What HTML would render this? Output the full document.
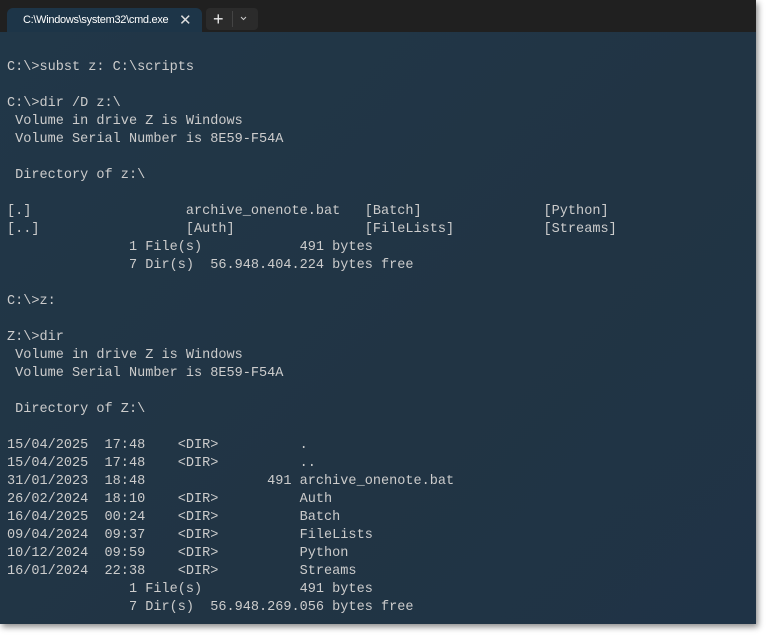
<!DOCTYPE html>
<html><head><meta charset="utf-8"><style>
html,body{margin:0;padding:0;background:#fff;width:768px;height:638px;overflow:hidden}
.win{position:absolute;left:0;top:0;width:756px;height:624px;background:#202020;box-shadow:2px 3px 6px rgba(0,0,0,.45);overflow:hidden}
.tab{position:absolute;left:7px;top:8px;width:195px;height:26px;background:#1d3548;border-radius:6px 6px 0 0;font:11px "Liberation Sans",sans-serif;color:#fff}
.tab .t{position:absolute;left:16px;top:6px;letter-spacing:-0.3px}
.tab .x{position:absolute;left:172px;top:3px;font-size:15px;color:#ddd}
.btn{position:absolute;top:8px;height:22px;background:#2b2b2b;border-radius:4px}
.term{position:absolute;left:0;top:32px;width:756px;height:592px;background:linear-gradient(135deg,#213748 0%,#213444 60%,#1f3346 100%)}
pre{position:absolute;left:7px;top:27px;margin:0;font:13.55px/18px "Liberation Mono",monospace;color:#cccccc}
</style></head><body>
<div class="win">
<div class="tab"><span class="t">C:\Windows\system32\cmd.exe</span><span class="x">✕</span></div>
<div class="btn" style="left:206px;width:52px"></div>
<div style="position:absolute;left:213px;top:9px;color:#eee;font:18px 'Liberation Sans',sans-serif">+</div>
<div style="position:absolute;left:232px;top:11px;width:1px;height:16px;background:#444"></div>
<svg style="position:absolute;left:240px;top:16px" width="7" height="5" viewBox="0 0 7 5"><path d="M1 1 L3.5 3.5 L6 1" stroke="#ccc" stroke-width="1" fill="none"/></svg>
<div class="term">
<pre>C:\&gt;subst z: C:\scripts

C:\&gt;dir /D z:\
 Volume in drive Z is Windows
 Volume Serial Number is 8E59-F54A

 Directory of z:\

[.]                   archive_onenote.bat   [Batch]               [Python]
[..]                  [Auth]                [FileLists]           [Streams]
               1 File(s)            491 bytes
               7 Dir(s)  56.948.404.224 bytes free

C:\&gt;z:

Z:\&gt;dir
 Volume in drive Z is Windows
 Volume Serial Number is 8E59-F54A

 Directory of Z:\

15/04/2025  17:48    &lt;DIR&gt;          .
15/04/2025  17:48    &lt;DIR&gt;          ..
31/01/2023  18:48               491 archive_onenote.bat
26/02/2024  18:10    &lt;DIR&gt;          Auth
16/04/2025  00:24    &lt;DIR&gt;          Batch
09/04/2024  09:37    &lt;DIR&gt;          FileLists
10/12/2024  09:59    &lt;DIR&gt;          Python
16/01/2024  22:38    &lt;DIR&gt;          Streams
               1 File(s)            491 bytes
               7 Dir(s)  56.948.269.056 bytes free</pre>
</div>
</div>
</body></html>
